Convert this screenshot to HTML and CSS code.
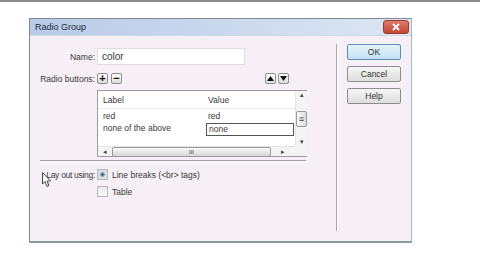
FILE: index.html
```html
<!DOCTYPE html>
<html lang="en">
<head>
  <meta charset="UTF-8">
  <title>Radio Group</title>
  <link rel="stylesheet" href="styles.css">
</head>
<body>
  <div class="topline"></div>
  <div class="dialog">
    <div class="titlebar">
      <span class="title">Radio Group</span>
      <span class="close">
        <svg width="12" height="8" viewBox="0 0 12 8"><path d="M3 1 L9 7 M9 1 L3 7" stroke="#fff" stroke-width="1.8"/></svg>
      </span>
    </div>
    <div class="body">
      <div class="main">
        <div class="row name-row">
          <span class="lbl">Name:</span>
          <div class="input">color</div>
        </div>
        <div class="row tools-row">
          <span class="lbl">Radio buttons:</span>
          <span class="sq">+</span>
          <span class="sq">&minus;</span>
          <span class="spacer"></span>
          <span class="sq arrow">
            <svg width="7" height="5" viewBox="0 0 7 5"><path d="M0 5 L3.5 0 L7 5 Z" fill="#111"/></svg>
          </span>
          <span class="sq arrow">
            <svg width="7" height="5" viewBox="0 0 7 5"><path d="M0 0 L3.5 5 L7 0 Z" fill="#111"/></svg>
          </span>
        </div>
        <div class="grid-box">
          <div class="cells">
            <div class="trow head"><span class="c1">Label</span><span class="c2">Value</span></div>
            <div class="trow"><span class="c1">red</span><span class="c2">red</span></div>
            <div class="trow"><span class="c1">none of the above</span><span class="c2 edit">none</span></div>
          </div>
          <div class="vscroll">
            <span class="arr">&#9652;</span>
            <span class="vthumb">&#8801;</span>
            <span class="arr">&#9662;</span>
          </div>
          <div class="hscroll">
            <span class="arr">&#9666;</span>
            <span class="hthumb">III</span>
            <span class="arr right">&#9656;</span>
          </div>
          <div class="corner"></div>
        </div>
        <div class="sep"></div>
        <div class="row opt-row">
          <span class="lbl tight">Lay out using:</span>
          <span class="radio on"><span class="dot"></span></span>
          <span class="opt">Line breaks (&lt;br&gt; tags)</span>
        </div>
        <div class="row opt-row">
          <span class="lbl"></span>
          <span class="radio"></span>
          <span class="opt">Table</span>
        </div>
      </div>
      <div class="vsep"></div>
      <div class="buttons">
        <div class="btn default">OK</div>
        <div class="btn">Cancel</div>
        <div class="btn">Help</div>
      </div>
    </div>
  </div>
  <svg class="cursor" width="10" height="16" viewBox="0 0 10 16">
    <path d="M0.5 0.5 L0.5 12 L3 9.5 L5 14.5 L7 13.5 L5 9 L8.5 9 Z" fill="#fff" stroke="#444" stroke-width="1"/>
  </svg>
</body>
</html>
```

FILE: styles.css
```css
body {
  margin: 0;
  background: #fff;
  font-family: "Liberation Sans", Arial, sans-serif;
  font-size: 8.5px;
  color: #3a3a3a;
  position: relative;
  height: 270px;
  overflow: hidden;
}
.topline {
  height: 2px;
  background: #8c8c8c;
}
.dialog {
  margin: 16px 0 0 29px;
  width: 381px;
  border: 1px solid #7e8a92;
  border-right-color: #9fb6c8;
  border-bottom: 2px solid #8a9c98;
  background: #f6eff6;
}
.titlebar {
  height: 16px;
  display: flex;
  align-items: center;
  justify-content: space-between;
  padding: 0 2px 0 5px;
  background: linear-gradient(to right, #b8cae8, #cedbef 60%, #dde6f4);
  border-bottom: 1px solid #d0d9e6;
}
.title {
  color: #1e2a3a;
  font-size: 9px;
}
.close {
  width: 24px;
  height: 12px;
  border-radius: 3px;
  background: linear-gradient(#e07a6a, #c24634);
  border: 1px solid #9b3a2c;
  display: flex;
  align-items: center;
  justify-content: center;
}
.body {
  display: flex;
  height: 205px;
}
.main {
  width: 268px;
  padding: 12px 0 0 10px;
}
.row {
  display: flex;
  align-items: center;
}
.lbl {
  width: 55px;
  margin-right: 2px;
  flex: none;
  display: flex;
  justify-content: flex-end;
  white-space: nowrap;
}
.lbl.tight {
  letter-spacing: -0.3px;
}
.input {
  width: 142px;
  height: 15px;
  line-height: 15px;
  padding-left: 4px;
  background: #fff;
  border: 1px solid #e2dbe4;
  font-size: 10px;
}
.tools-row {
  margin-top: 8px;
  height: 11px;
  width: 251px;
}
.sq {
  width: 9px;
  height: 9px;
  border: 1px solid #8e8e8e;
  border-radius: 2px;
  background: linear-gradient(#fff, #dcdcdc);
  display: flex;
  align-items: center;
  justify-content: center;
  font-weight: bold;
  font-size: 11px;
  line-height: 9px;
  color: #111;
  margin-right: 3px;
}
.spacer {
  flex: 1;
}
.arrow {
  margin-right: 2px;
}
.grid-box {
  margin: 6px 0 0 57px;
  width: 208px;
  height: 65px;
  border: 1px solid #9b9b9b;
  background: #fff;
  display: grid;
  grid-template-columns: 1fr 12px;
  grid-template-rows: 1fr 10px;
}
.cells {
  overflow: hidden;
}
.trow {
  display: flex;
  height: 12px;
  align-items: center;
}
.trow.head {
  height: 17px;
  border-bottom: 1px solid #ececec;
  margin-bottom: 1px;
}
.c1 {
  width: 103px;
  padding-left: 5px;
  flex: none;
}
.c2 {
  flex: 1;
  padding-left: 2px;
}
.c2.edit {
  border: 1px solid #555;
  height: 11px;
  line-height: 11px;
  margin-top: 2px;
  margin-right: 1px;
}
.vscroll {
  border-left: 1px solid #e4e4e4;
  background: #f4f4f4;
  display: flex;
  flex-direction: column;
  align-items: center;
  justify-content: space-between;
  font-size: 7px;
  color: #444;
}
.vthumb {
  width: 9px;
  height: 14px;
  border: 1px solid #9a9a9a;
  border-radius: 2px;
  background: linear-gradient(to right, #fafafa, #dcdcdc);
  text-align: center;
  line-height: 14px;
  font-size: 9px;
}
.hscroll {
  border-top: 1px solid #e4e4e4;
  background: #f4f4f4;
  display: flex;
  align-items: center;
  font-size: 7px;
  color: #444;
}
.hscroll .arr {
  width: 14px;
  text-align: center;
}
.hscroll .arr.right {
  margin-left: auto;
  width: 24px;
}
.hthumb {
  width: 157px;
  height: 8px;
  border: 1px solid #9a9a9a;
  border-radius: 2px;
  background: linear-gradient(#fafafa, #d6d6d6);
  text-align: center;
  line-height: 8px;
  font-size: 6px;
}
.corner {
  background: #f4f4f4;
}
.sep {
  margin-top: 3px;
  width: 266px;
  height: 1px;
  border-top: 1px solid #a6a2a6;
  border-bottom: 1px solid #fff;
}
.opt-row {
  margin-top: 6px;
  height: 11px;
}
.opt-row + .opt-row {
  margin-top: 6px;
}
.radio {
  width: 9px;
  height: 9px;
  border: 1px solid #b8b8b8;
  background: linear-gradient(#e8e8e8, #fafafa);
  display: flex;
  align-items: center;
  justify-content: center;
  margin-right: 4px;
}
.radio.on {
  background: #d8dde2;
}
.dot {
  width: 5px;
  height: 5px;
  border-radius: 50%;
  background: #3e6c8a;
  border: 1px solid #9ab;
  box-sizing: border-box;
}
.vsep {
  width: 1px;
  margin: 8px 0 10px 28px;
  background: #a7a3a8;
  border-right: 1px solid #fff;
}
.buttons {
  margin: 8px 0 0 9px;
  display: flex;
  flex-direction: column;
  gap: 6px;
}
.btn {
  width: 52px;
  height: 14px;
  line-height: 14px;
  text-align: center;
  border: 1px solid #8d8d8d;
  border-radius: 2px;
  background: linear-gradient(#f6f6f6, #dddddd);
  color: #333;
}
.btn.default {
  border-color: #5f8fb0;
  background: linear-gradient(#e6f3fb, #c4e0f2);
}
.cursor {
  position: absolute;
  left: 42px;
  top: 172px;
}
```
